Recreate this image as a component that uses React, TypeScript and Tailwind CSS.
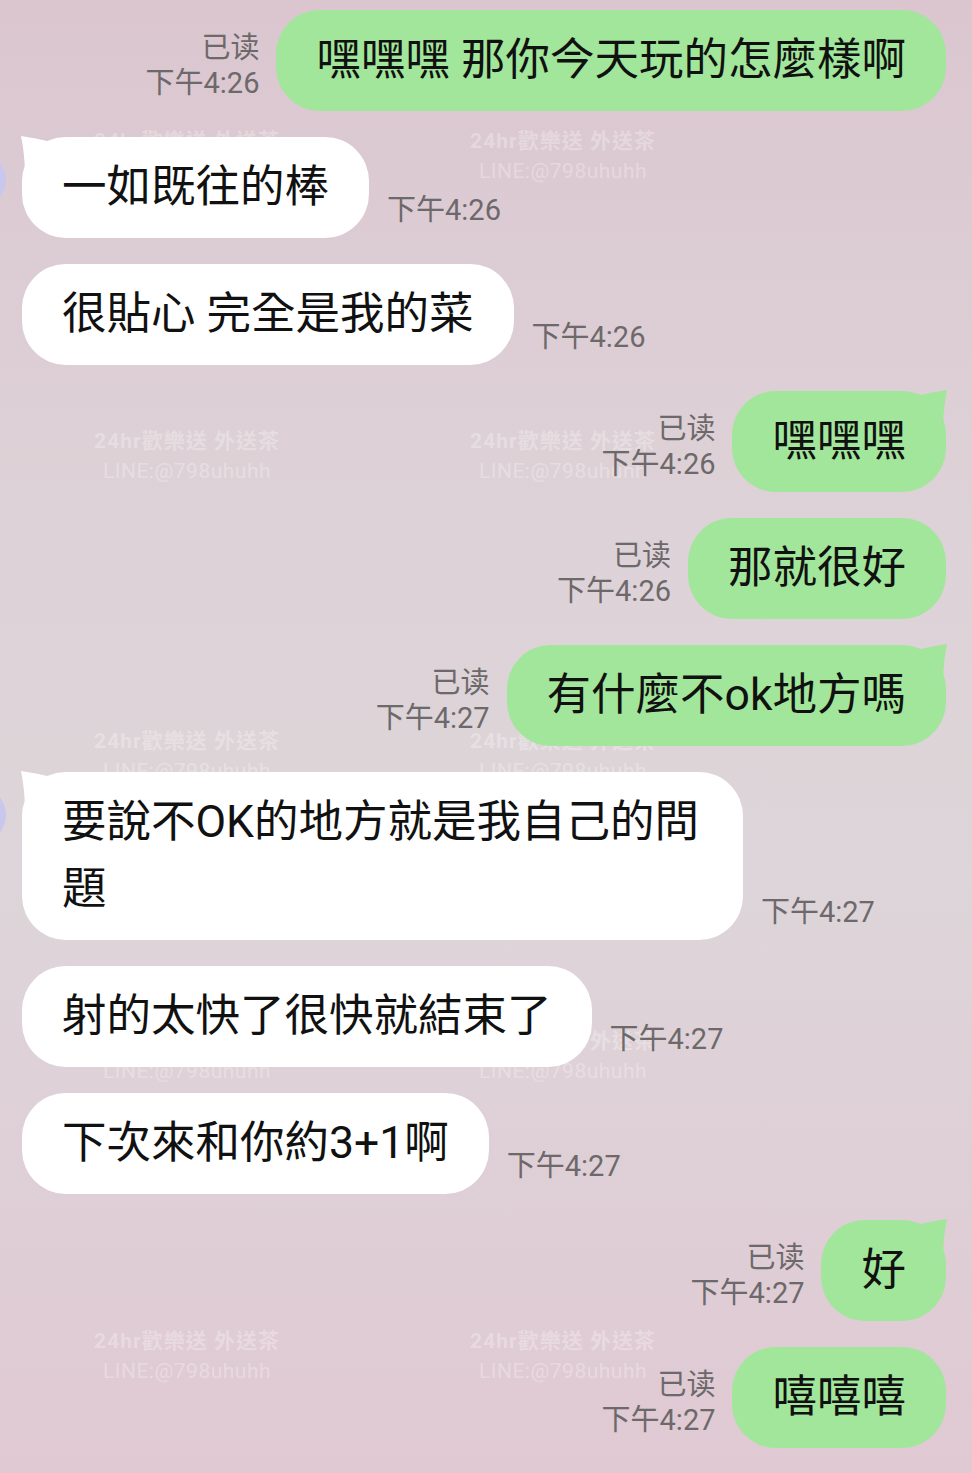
import React from "react";

type Msg = {
  me: boolean;
  text: string;
  time: string;
  tail?: boolean;
};

const messages: Msg[] = [
  { me: true, text: "嘿嘿嘿 那你今天玩的怎麼樣啊", time: "下午4:26" },
  { me: false, text: "一如既往的棒", time: "下午4:26", tail: true },
  { me: false, text: "很貼心 完全是我的菜", time: "下午4:26" },
  { me: true, text: "嘿嘿嘿", time: "下午4:26", tail: true },
  { me: true, text: "那就很好", time: "下午4:26" },
  { me: true, text: "有什麼不ok地方嗎", time: "下午4:27", tail: true },
  { me: false, text: "要說不OK的地方就是我自己的問題", time: "下午4:27", tail: true },
  { me: false, text: "射的太快了很快就結束了", time: "下午4:27" },
  { me: false, text: "下次來和你約3+1啊", time: "下午4:27" },
  { me: true, text: "好", time: "下午4:27", tail: true },
  { me: true, text: "嘻嘻嘻", time: "下午4:27" },
];

// watermark grid (x center, y top)
const marks: [number, number][] = [];
[126, 426, 726, 1026, 1326].forEach((y) => {
  [187, 563].forEach((x) => marks.push([x, y]));
});

const Tail = ({ me, color }: { me: boolean; color: string }) => (
  <svg
    width="34"
    height="36"
    viewBox="0 0 34 36"
    className={`absolute -top-[1px] ${me ? "-right-[1px]" : "-left-[1px] -scale-x-100"}`}
  >
    <path d="M3 6 Q20 2 34 0 Q31 14 30 34 Z" fill={color} />
  </svg>
);

const Meta = ({ read, time }: { read: boolean; time: string }) => (
  <div
    className={`flex flex-col mb-[10px] text-[29px] leading-[35px] text-[#6d696b] whitespace-nowrap ${
      read ? "items-end" : "items-start"
    }`}
  >
    {read && <span>已读</span>}
    <span>{time}</span>
  </div>
);

const Row = ({ m }: { m: Msg }) => {
  const bg = m.me ? "#a1e69a" : "#ffffff";
  const bubble = (
    <div
      className={`relative rounded-[44px] px-[40px] py-[17px] text-[44.5px] leading-[67px] text-[#111111] ${
        m.me ? "bg-[#a1e69a]" : "bg-white max-w-[721px]"
      }`}
    >
      {m.tail && <Tail me={m.me} color={bg} />}
      <span className="relative whitespace-pre-wrap">{m.text}</span>
    </div>
  );
  if (m.me) {
    return (
      <div className="flex justify-end items-end gap-[17px]">
        <Meta read time={m.time} />
        {bubble}
      </div>
    );
  }
  return (
    <div className="relative flex justify-start items-end gap-[18px]">
      {m.tail && (
        <div className="absolute -left-[74px] top-[14px] w-[58px] h-[58px] rounded-full bg-[#c9c7ee]" />
      )}
      {bubble}
      <Meta read={false} time={m.time} />
    </div>
  );
};

export default function App() {
  return (
    <div className="relative w-full min-h-[1473px] overflow-hidden bg-[linear-gradient(180deg,#dbc6cf_0%,#ddd2d7_35%,#ddd5d9_60%,#e0c9d3_100%)] font-['Roboto','Noto_Sans_CJK_TC',sans-serif]">
      <div className="absolute inset-0 pointer-events-none">
        {marks.map(([x, y], i) => (
          <div
            key={i}
            className="absolute flex flex-col items-center w-[230px] -translate-x-1/2 text-white/30 text-[21px] leading-[30px] whitespace-nowrap"
            style={{ left: x, top: y }}
          >
            <span className="font-bold tracking-[1px]">24hr歡樂送 外送茶</span>
            <span className="tracking-[0.5px]">LINE:@798uhuhh</span>
          </div>
        ))}
      </div>
      <div className="relative flex flex-col gap-[26px] pt-[10px] pl-[22px] pr-[26px] pb-[24px]">
        {messages.map((m, i) => (
          <Row key={i} m={m} />
        ))}
      </div>
    </div>
  );
}
